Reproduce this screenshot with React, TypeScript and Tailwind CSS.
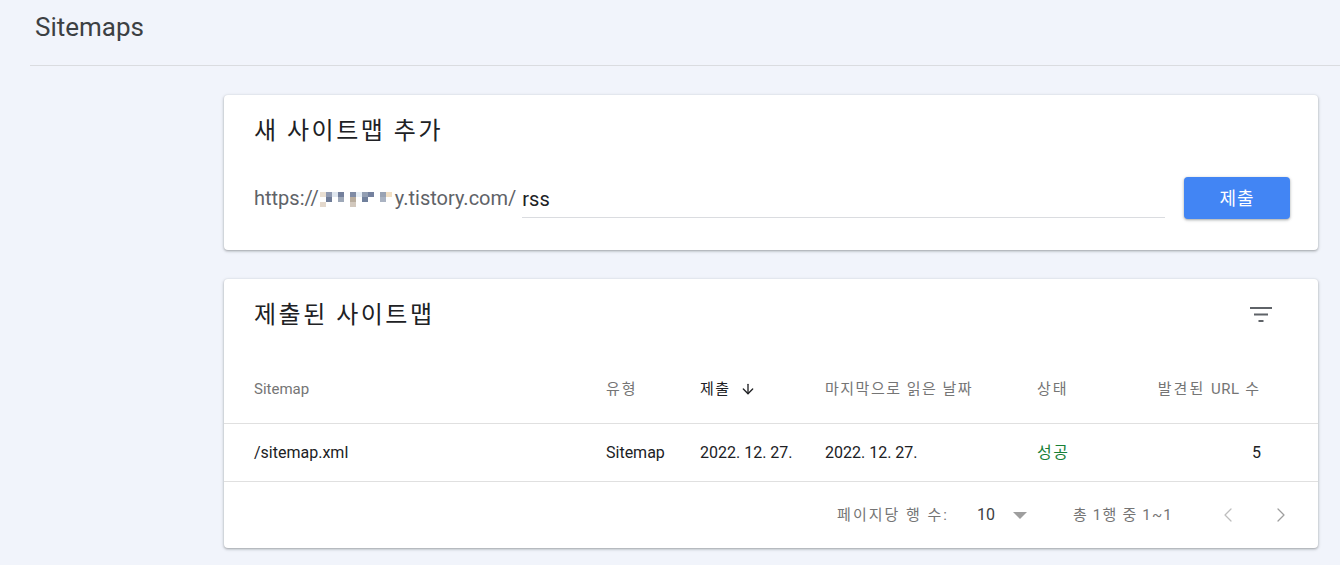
import { ArrowDown, ChevronLeft, ChevronRight } from "lucide-react";

const latin = "font-['Roboto','Noto_Sans_CJK_KR',sans-serif]";

const shadow = "shadow-[0_1px_2px_rgba(60,64,67,0.3),0_1px_3px_1px_rgba(60,64,67,0.15)]";

// blurred-out part of the blog address
const pixelRows = [
  ["#e9dfd2", "#8f99b0", "#dfe6ee", "#74809c", "#ffffff", "#7f8ba4", "#e6eef5", "#929eb2", "#74819e", "#ffffff", "#9aa3b4", "#f1dfc4"],
  ["#ffffff", "#6f7c97", "#ffffff", "#9ea8b8", "#ffffff", "#b9ad9e", "#ffffff", "#70809c", "#ffffff", "#ffffff", "#aab3c2", "#ffffff"],
  ["#e3d8cc", "#ffffff", "#ffffff", "#ffffff", "#ffffff", "#d2c8bd", "#ffffff", "#ffffff", "#ffffff", "#ffffff", "#ffffff", "#ffffff"],
];

const Pixelated = () => (
  <span className="mx-[1px] inline-flex w-[74px] flex-col gap-0 pt-[2px]">
    {pixelRows.map((row, r) => (
      <span key={r} className="flex">
        {row.map((c, i) => (
          <span key={i} className="block h-[5px] w-[6px]" style={{ backgroundColor: c }} />
        ))}
      </span>
    ))}
  </span>
);

const FilterIcon = () => (
  <svg width="22" height="15" viewBox="0 0 22 15" className="text-[#5f6368]">
    <path d="M0 0h22v2H0zM4 6.5h14v2H4zM8.5 13h5v2h-5z" fill="currentColor" />
  </svg>
);

const App = () => {
  return (
    <div className={`min-h-screen bg-[#f1f4fb] ${latin}`}>
      <div className="ml-[30px] h-[66px] border-b border-[#dadce0] pl-[5px] pt-[11px]">
        <h1 className="text-[26px] leading-[32px] text-[#3c4043]">Sitemaps</h1>
      </div>

      <div className="flex flex-col gap-[29px] pl-[224px] pr-[22px] pt-[29px]">
        <section className={`rounded-[4px] bg-white pb-[31px] pl-[30px] pr-[28px] pt-[20px] ${shadow}`}>
          <h2 className="text-[24px] leading-[32px] tracking-[2.5px] text-[#202124]">새 사이트맵 추가</h2>
          <div className="mt-[30px] flex h-[42px] items-center">
            <span className="flex items-center text-[20px] text-[#5f6368]">
              https://
              <Pixelated />
              y.tistory.com/
            </span>
            <div className="ml-[6px] flex h-[40px] flex-1 items-center border-b border-[#dadce0] pt-[2px] text-[20px] text-[#202124]">
              rss
            </div>
            <button className={`ml-[19px] h-[42px] w-[106px] rounded-[4px] bg-[#4285f4] text-[18px] tracking-[1px] text-white ${shadow}`}>
              제출
            </button>
          </div>
        </section>

        <section className={`rounded-[4px] bg-white ${shadow}`}>
          <div className="flex h-[76px] items-start justify-between pl-[30px] pr-[46px] pt-[20px]">
            <h2 className="text-[24px] leading-[32px] tracking-[2.5px] text-[#202124]">제출된 사이트맵</h2>
            <div className="mt-[8px]">
              <FilterIcon />
            </div>
          </div>

          <div className="flex h-[69px] items-center border-b border-[#e0e0e0] pl-[30px] pr-[57px] text-[15px] text-[#757575]">
            <div className="w-[352px]">Sitemap</div>
            <div className="w-[94px] tracking-[2px]">유형</div>
            <div className="flex w-[125px] items-center gap-[9px] tracking-[1.5px] text-[#202124]">
              제출
              <ArrowDown size={16} strokeWidth={2} />
            </div>
            <div className="w-[212px] tracking-[1.5px]">마지막으로 읽은 날짜</div>
            <div className="w-[100px] tracking-[2px]">상태</div>
            <div className="flex-1 text-right tracking-[2px]">
              발견된 <span className="tracking-[0.5px]">URL</span> 수
            </div>
          </div>

          <div className="flex h-[58px] items-center border-b border-[#e0e0e0] pl-[30px] pr-[57px] text-[16px] text-[#202124]">
            <div className="w-[352px]">/sitemap.xml</div>
            <div className="w-[94px]">Sitemap</div>
            <div className="w-[125px]">2022. 12. 27.</div>
            <div className="w-[212px]">2022. 12. 27.</div>
            <div className="w-[100px] tracking-[1.5px] text-[#188038]">성공</div>
            <div className="flex-1 text-right">5</div>
          </div>

          <div className="flex h-[66px] items-center justify-end pr-[25px] text-[15px] text-[#757575]">
            <span className="tracking-[2px]">페이지당 행 수:</span>
            <span className="ml-[28px] text-[16px] text-[#3c4043]">10</span>
            <svg width="16" height="10" viewBox="0 0 16 10" className="ml-[17px]">
              <path d="M1 2h14l-7 7z" fill="#9e9e9e" />
            </svg>
            <span className="ml-[45px] tracking-[1.2px]">총 1행 중 1~1</span>
            <ChevronLeft size={24} strokeWidth={1.25} className="ml-[43px] text-[#bdbdbd]" />
            <ChevronRight size={24} strokeWidth={1.25} className="ml-[29px] text-[#9e9e9e]" />
          </div>
        </section>
      </div>
    </div>
  );
};

export default App;
